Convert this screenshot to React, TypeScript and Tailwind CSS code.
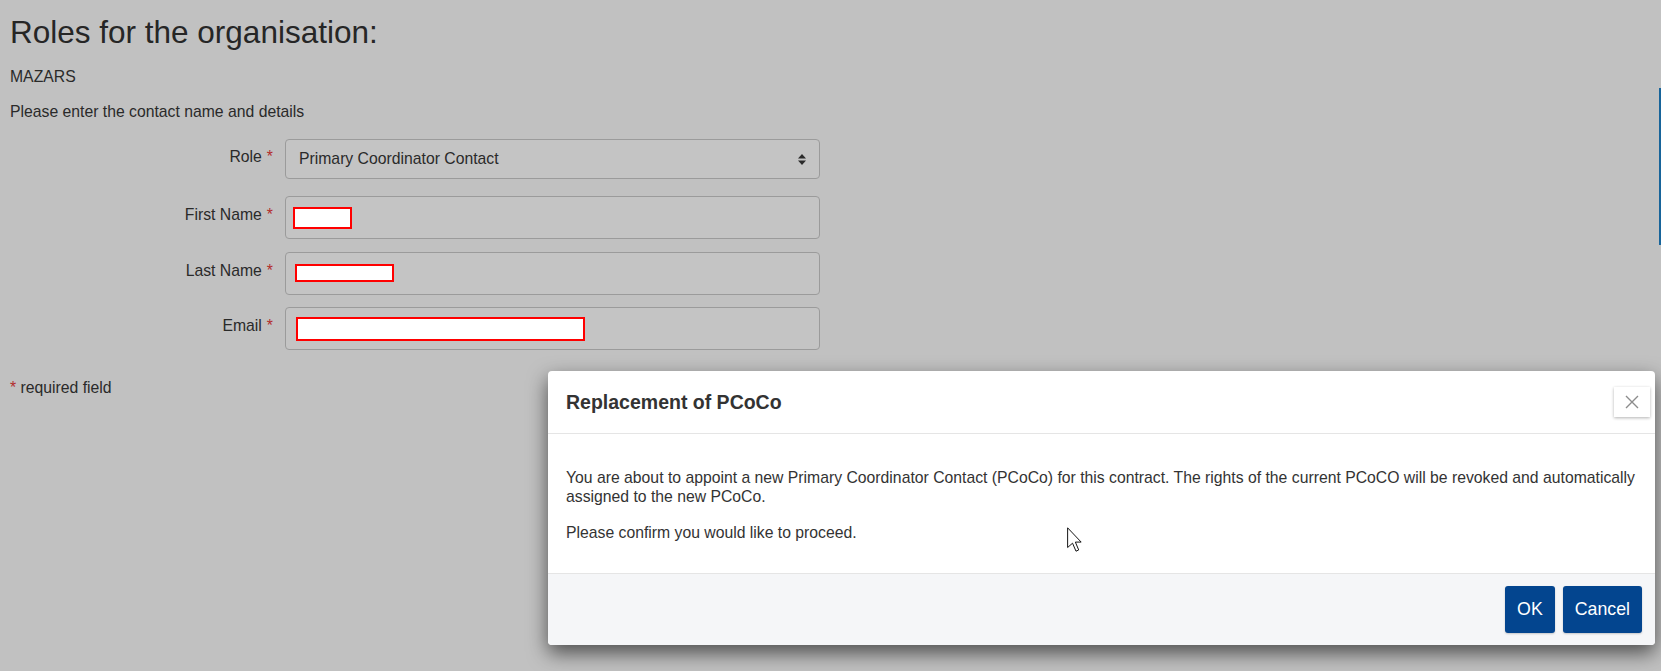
import React from 'react';

const Req = () => <span className="ml-[5px] text-[#b32d2d]">*</span>;

function Row({ label, h, pt, mb, children }: { label: string; h: string; pt: string; mb: string; children: React.ReactNode }) {
  return (
    <div className={`flex ${mb}`}>
      <div className={`w-[263px] text-right ${pt}`}>
        {label}
        <Req />
      </div>
      <div className={`ml-[12px] flex w-[535px] items-center rounded-[4px] border border-[#9b9b9b] bg-[#c4c4c4] ${h}`}>
        {children}
      </div>
    </div>
  );
}

const Redact = ({ w, h, ml }: { w: string; h: string; ml: string }) => (
  <div className={`border-2 border-[#ff0000] bg-white ${w} ${h} ${ml}`} />
);

export default function App() {
  return (
    <div className="relative h-[671px] w-full overflow-hidden bg-[#c1c1c1] font-['Liberation_Sans',Arial,sans-serif] text-[15.75px] leading-[22.5px] text-[#2a2a2a]">
      <div className="pl-[10px] pt-[15px]">
        <h2 className="text-[31.5px] leading-[1.1] text-[#262626]">Roles for the organisation:</h2>
        <p className="mt-[16px]">MAZARS</p>
        <p className="mt-[12.5px]">Please enter the contact name and details</p>

        <form className="mt-[16px] flex flex-col">
          <Row label="Role" h="h-[40px]" pt="pt-[6.5px]" mb="mb-[17px]">
            <div className="flex w-full items-center justify-between pl-[13px] pr-[13px]">
              <span>Primary Coordinator Contact</span>
              <svg width="8" height="11" viewBox="0 0 8 11" fill="#2a2a2a">
                <path d="M4 0 L8 4.5 L0 4.5 Z" />
                <path d="M4 11 L8 6.5 L0 6.5 Z" />
              </svg>
            </div>
          </Row>
          <Row label="First Name" h="h-[43px]" pt="pt-[8px]" mb="mb-[12.5px]">
            <Redact w="w-[59px]" h="h-[22px]" ml="ml-[7px]" />
          </Row>
          <Row label="Last Name" h="h-[43px]" pt="pt-[8px]" mb="mb-[12.5px]">
            <Redact w="w-[99px]" h="h-[18px]" ml="ml-[9px]" />
          </Row>
          <Row label="Email" h="h-[43px]" pt="pt-[8px]" mb="mb-0">
            <Redact w="w-[289px]" h="h-[24px]" ml="ml-[10px]" />
          </Row>
        </form>

        <p className="mt-[27px]">
          <span className="text-[#b32d2d]">*</span> required field
        </p>
      </div>

      {/* scroll indicator on the right edge */}
      <div className="absolute right-0 top-[88px] h-[157px] w-[2px] bg-[#17649a]" />

      {/* modal */}
      <div className="absolute left-[548px] top-[371px] w-[1107px] overflow-hidden rounded-[4px] bg-white shadow-[0_8px_20px_rgba(0,0,0,0.6)]">
        <div className="flex h-[63px] items-center justify-between border-b border-[#e5e5e5] pl-[18px] pr-[5px]">
          <h4 className="text-[19.5px] font-bold text-[#333]">Replacement of PCoCo</h4>
          <button className="flex h-[30px] w-[36px] items-center justify-center bg-white shadow-[0_1px_3px_rgba(0,0,0,0.3)]">
            <svg width="14" height="14" viewBox="0 0 14 14" stroke="#8c8c8c" strokeWidth="1.4" fill="none">
              <path d="M1 1 L13 13 M13 1 L1 13" />
            </svg>
          </button>
        </div>
        <div className="px-[18px] pb-[31px] pt-[34px] text-[15.75px] leading-[19px] text-[#333]">
          <p className="mb-[17px] whitespace-nowrap">
            You are about to appoint a new Primary Coordinator Contact (PCoCo) for this contract. The rights of the current PCoCO will be revoked and automatically
            <br />
            assigned to the new PCoCo.
          </p>
          <p>Please confirm you would like to proceed.</p>
        </div>
        <div className="flex justify-end gap-[8px] border-t border-[#e5e5e5] bg-[#f5f6f8] pb-[12px] pr-[13px] pt-[12px]">
          <button className="h-[47px] rounded-[3px] bg-[#03458f] px-3 text-[17.75px] text-white shadow-[0_1px_2px_rgba(0,0,0,0.2)]">OK</button>
          <button className="h-[47px] rounded-[3px] bg-[#03458f] px-3 text-[17.75px] text-white shadow-[0_1px_2px_rgba(0,0,0,0.2)]">Cancel</button>
        </div>
      </div>

      {/* mouse pointer */}
      <svg className="absolute left-[1067px] top-[527px]" width="16" height="25" viewBox="-0.5 -0.5 13 20">
        <path d="M0 0 L0 16 L4 12.5 L6.8 19 L9 18 L6.3 11.6 L11 11.6 Z" fill="white" stroke="#111" strokeWidth="0.8" strokeLinejoin="round" />
      </svg>
    </div>
  );
}
